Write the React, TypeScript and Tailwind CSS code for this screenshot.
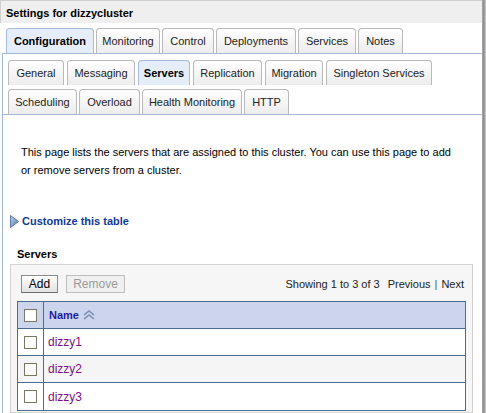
import React from 'react';

type Tab = { label: string; w: number; active?: boolean };

const topTabs: Tab[] = [
  { label: 'Configuration', w: 88, active: true },
  { label: 'Monitoring', w: 64 },
  { label: 'Control', w: 52 },
  { label: 'Deployments', w: 80 },
  { label: 'Services', w: 58 },
  { label: 'Notes', w: 45 },
];

const subRow1: Tab[] = [
  { label: 'General', w: 56 },
  { label: 'Messaging', w: 68 },
  { label: 'Servers', w: 52, active: true },
  { label: 'Replication', w: 69 },
  { label: 'Migration', w: 58 },
  { label: 'Singleton Services', w: 106 },
];

const subRow2: Tab[] = [
  { label: 'Scheduling', w: 69 },
  { label: 'Overload', w: 61 },
  { label: 'Health Monitoring', w: 100 },
  { label: 'HTTP', w: 45 },
];

const servers = ['dizzy1', 'dizzy2', 'dizzy3'];

const TabItem: React.FC<{ tab: Tab }> = ({ tab }) => (
  <div
    style={{ width: tab.w }}
    className={`h-[25px] shrink-0 flex items-center justify-center rounded-t-[4px] border border-b-0 ${
      tab.active
        ? 'bg-[#e5eef8] border-[#a7bcd8] font-bold text-black'
        : 'bg-gradient-to-b from-white to-[#ececec] border-[#b9b9b9] text-[#222]'
    }`}
  >
    {tab.label}
  </div>
);

const Checkbox = () => (
  <div className="w-[13px] h-[13px] border border-[#7c7866] bg-white" />
);

export default function App() {
  return (
    <div className="w-[486px] h-[413px] overflow-hidden bg-white flex font-['Liberation_Sans',Arial,sans-serif] text-[11px] text-black">
      <div className="w-[482px] flex flex-col">
        {/* title bar */}
        <div className="h-[23px] shrink-0 bg-[#efefef] border-t border-l border-[#cfcfcf] pl-[5px] pt-[2px] flex items-center font-bold text-[11px]">
          Settings for dizzycluster
        </div>

        {/* top tabs */}
        <div className="flex gap-[2px] pl-[6px] pt-[5px]">
          {topTabs.map(t => <TabItem key={t.label} tab={t} />)}
        </div>

        {/* content */}
        <div className="flex-1 ml-[2px] border-t border-l border-[#a3b8d6] flex flex-col">
          <div className="border-b border-[#a3b8d6] pl-[5px] pt-[6px] flex flex-col gap-[4px]">
            <div className="flex gap-[3px]">
              {subRow1.map(t => <TabItem key={t.label} tab={t} />)}
            </div>
            <div className="flex gap-[2px]">
              {subRow2.map(t => <TabItem key={t.label} tab={t} />)}
            </div>
          </div>

          <p className="pl-[18px] pr-[20px] pt-[28px] leading-[18px]">
            This page lists the servers that are assigned to this cluster. You can use this page to add or remove servers from a cluster.
          </p>

          <div className="mt-[34px] pl-[7px] flex items-center gap-[3px] h-[16px]">
            <svg width="9" height="13" viewBox="0 0 9 13">
              <defs>
                <linearGradient id="tri" x1="0" y1="0" x2="1" y2="1">
                  <stop offset="0%" stopColor="#c9d6ec" />
                  <stop offset="100%" stopColor="#4f6fa8" />
                </linearGradient>
              </defs>
              <polygon points="0.5,0.5 8.5,6.5 0.5,12.5" fill="url(#tri)" stroke="#5d77a8" strokeWidth="1" />
            </svg>
            <span className="font-bold text-[#0f3a94]">Customize this table</span>
          </div>

          <div className="mt-[17px] pl-[14px] h-[16px] leading-[16px] font-bold">Servers</div>

          <div className="mt-[2px] ml-[7px] w-[463px] flex-1 border border-[#d2d2d2] bg-[#f6f6f6] pl-[6px] pt-[10px]">
            <div className="flex items-center w-[449px]">
              <button className="ml-[4px] w-[37px] h-[18px] border border-[#8c8c8c] border-b-[#6a6a6a] bg-gradient-to-b from-white to-[#e2e2e2] text-[12px] leading-none">
                Add
              </button>
              <button className="ml-[8px] w-[59px] h-[18px] border border-[#bdbdbd] bg-[#f0f0f0] text-[#9a9a9a] text-[12px] leading-none">
                Remove
              </button>
              <div className="ml-auto mr-[2px] flex items-center gap-[4px] text-[#222]">
                <span>Showing 1 to 3 of 3</span>
                <span className="ml-[4px]">Previous</span>
                <span className="text-[#555]">|</span>
                <span>Next</span>
              </div>
            </div>

            <div className="mt-[8px] w-[449px] border border-[#4e6c8f] bg-white">
              <div className="flex h-[27px] bg-[#ccd5ec] border-b border-[#4e6c8f]">
                <div className="w-[26px] shrink-0 border-r border-[#4e6c8f] flex items-center justify-center">
                  <Checkbox />
                </div>
                <div className="flex items-center pl-[5px] gap-[3px]">
                  <span className="font-bold text-[#1c1ca0]">Name</span>
                  <svg width="14" height="10" viewBox="0 0 14 10">
                    <polyline points="2,5 7,1 12,5" fill="none" stroke="#7b8db5" strokeWidth="1.6" />
                    <polyline points="2,9 7,5 12,9" fill="none" stroke="#7b8db5" strokeWidth="1.6" />
                  </svg>
                </div>
              </div>
              {servers.map((s, i) => (
                <div
                  key={s}
                  className={`flex h-[27px] ${i < servers.length - 1 ? 'border-b border-[#4e6c8f]' : ''} ${i === 1 ? 'bg-[#f5f5f5]' : 'bg-white'}`}
                >
                  <div className="w-[26px] shrink-0 border-r border-[#4e6c8f] flex items-center justify-center">
                    <Checkbox />
                  </div>
                  <div className="flex items-center pl-[4px] text-[#7d1080] text-[12px]">{s}</div>
                </div>
              ))}
            </div>
          </div>
        </div>
      </div>
      <div className="w-[4px] shrink-0 bg-gradient-to-r from-[#a8a8a8] via-[#8c8c8c] to-[#d8d8d8]" />
    </div>
  );
}
